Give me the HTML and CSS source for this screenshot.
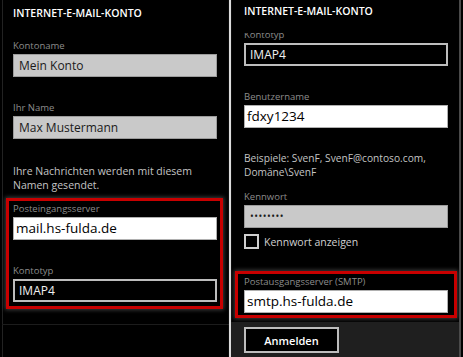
FILE: index.html
```html
<!DOCTYPE html>
<html lang="de">
<head>
    <meta charset="UTF-8">
    <title>Internet-E-Mail-Konto</title>
    <link rel="stylesheet" href="styles.css">
</head>
<body>
    <div class="phones">
        <!-- Screen 1: account name, sender name, incoming server -->
        <div class="screen screen-left">
            <h1 class="title">INTERNET-E-MAIL-KONTO</h1>

            <div class="label first">Kontoname</div>
            <div class="field field-gray">Mein Konto</div>

            <div class="label gap">Ihr Name</div>
            <div class="field field-gray">Max Mustermann</div>

            <p class="hint">Ihre Nachrichten werden mit diesem<br>Namen gesendet.</p>

            <div class="highlight highlight-left">
                <div class="label">Posteingangsserver</div>
                <div class="field field-white">mail.hs-fulda.de</div>

                <div class="label gap">Kontotyp</div>
                <div class="field field-dark">IMAP4</div>
            </div>

            <div class="bottom-line"></div>
        </div>

        <div class="divider"></div>

        <!-- Screen 2: scrolled down, user name, password, outgoing server -->
        <div class="screen screen-right">
            <h1 class="title">INTERNET-E-MAIL-KONTO</h1>

            <div class="scroll">
                <div class="label clipped">Kontotyp</div>
                <div class="field field-dark">IMAP4</div>

                <div class="label gap">Benutzername</div>
                <div class="field field-white">fdxy1234</div>

                <p class="hint hint-right">Beispiele: SvenF, SvenF@contoso.com,<br>Domäne\SvenF</p>

                <div class="label">Kennwort</div>
                <div class="field field-gray dots">••••••••</div>

                <label class="check">
                    <span class="box"></span>
                    <span>Kennwort anzeigen</span>
                </label>

                <div class="highlight highlight-right">
                    <div class="label">Postausgangsserver (SMTP)</div>
                    <div class="field field-white">smtp.hs-fulda.de</div>
                </div>
            </div>

            <div class="appbar">
                <button class="btn">Anmelden</button>
            </div>
        </div>
    </div>
</body>
</html>
```

FILE: styles.css
```css
html, body {
    margin: 0;
    padding: 0;
    background-color: #000;
}

body {
    font-family: "Open Sans", "Noto Sans", sans-serif;
    color: #fff;
    width: 463px;
    height: 357px;
    overflow: hidden;
}

.phones {
    display: flex;
    height: 357px;
}

.screen {
    display: flex;
    flex-direction: column;
    height: 357px;
    box-sizing: border-box;
}

.screen-left {
    width: 227px;
    margin-left: 2px;
    border-left: 1px solid #222; /* faint phone edge */
    padding-left: 10px;
}

.divider {
    width: 2px;
    background-color: #dcdcdc;
    box-shadow: 0 0 1px #888;
}

.screen-right {
    width: 230px;
    border-right: 2px solid #4a4a4a;
}

.title {
    margin: 0;
    font-size: 10.5px;
    font-weight: 600;
    line-height: 14px;
}

.screen-left .title {
    padding-top: 6px;
}

.screen-right .title {
    padding: 4px 0 0 13px;
    height: 33px;
    box-sizing: border-box;
    flex-shrink: 0;
}

.label {
    font-size: 9.5px;
    line-height: 12px;
    color: #8c8c8c;
    margin-bottom: 2px;
}

.label.first {
    margin-top: 20px;
}

.label.gap {
    margin-top: 25px;
}

.field {
    width: 204px;
    height: 23px;
    box-sizing: border-box;
    padding-left: 5px;
    font-size: 12px;
    line-height: 21px;
}

.field-gray {
    background-color: #c9c9c9;
    border: 1px solid #9c9c9c;
    color: #1a1a1a;
}

.field-white {
    background-color: #fff;
    border: 1px solid #b0b0b0;
    color: #000;
    font-size: 13.5px;
    padding-left: 2px;
}

.field-dark {
    background-color: #000;
    border: 2px solid #bdbdbd;
    color: #f0f0f0;
    line-height: 19px;
    padding-left: 4px;
}

.dots {
    font-size: 10px;
    letter-spacing: 0.5px;
}

.hint {
    margin: 25px 0 0 0;
    font-size: 10.5px;
    line-height: 14px;
    color: #c4c4c4;
}

/* red emphasis frame */
.highlight {
    border: 3px solid #c80000;
    box-shadow: 0 0 4px 1px rgba(90, 90, 90, 0.7);
    box-sizing: border-box;
}

.highlight-left {
    width: 217px;
    margin: 6px 0 0 -7px;
    padding: 2px 0 4px 4px;
}

.highlight-left .label {
    margin-top: 0;
}

.highlight-left .label.gap {
    margin-top: 25px;
}

.bottom-line {
    margin-top: 15px;
    margin-left: -11px;
    border-top: 1px solid #1c1c1c;
}

/* right screen */
.scroll {
    flex: 1;
    overflow: hidden;
    padding-left: 13px;
}

.label.clipped {
    margin-top: -4px;
}

.hint-right {
    margin-top: 24px;
    font-size: 10.2px;
    line-height: 13.5px;
    margin-bottom: 12px;
}

.check {
    display: flex;
    align-items: center;
    gap: 5px;
    margin-top: 6px;
    font-size: 10.5px;
    color: #d0d0d0;
}

.box {
    width: 15px;
    height: 15px;
    box-sizing: border-box;
    border: 2px solid #cfcfcf;
}

.highlight-right {
    width: 222px;
    margin: 22px 0 0 -9px;
    padding: 2px 0 2px 6px;
}

.appbar {
    height: 35px;
    flex-shrink: 0;
    background-color: #1f1f1f;
    padding: 5px 0 0 13px;
    box-sizing: border-box;
}

.btn {
    width: 95px;
    height: 26px;
    background-color: #000;
    border: 2px solid #bdbdbd;
    color: #fff;
    font-family: inherit;
    font-size: 11px;
    font-weight: 600;
    padding: 0;
}
```
